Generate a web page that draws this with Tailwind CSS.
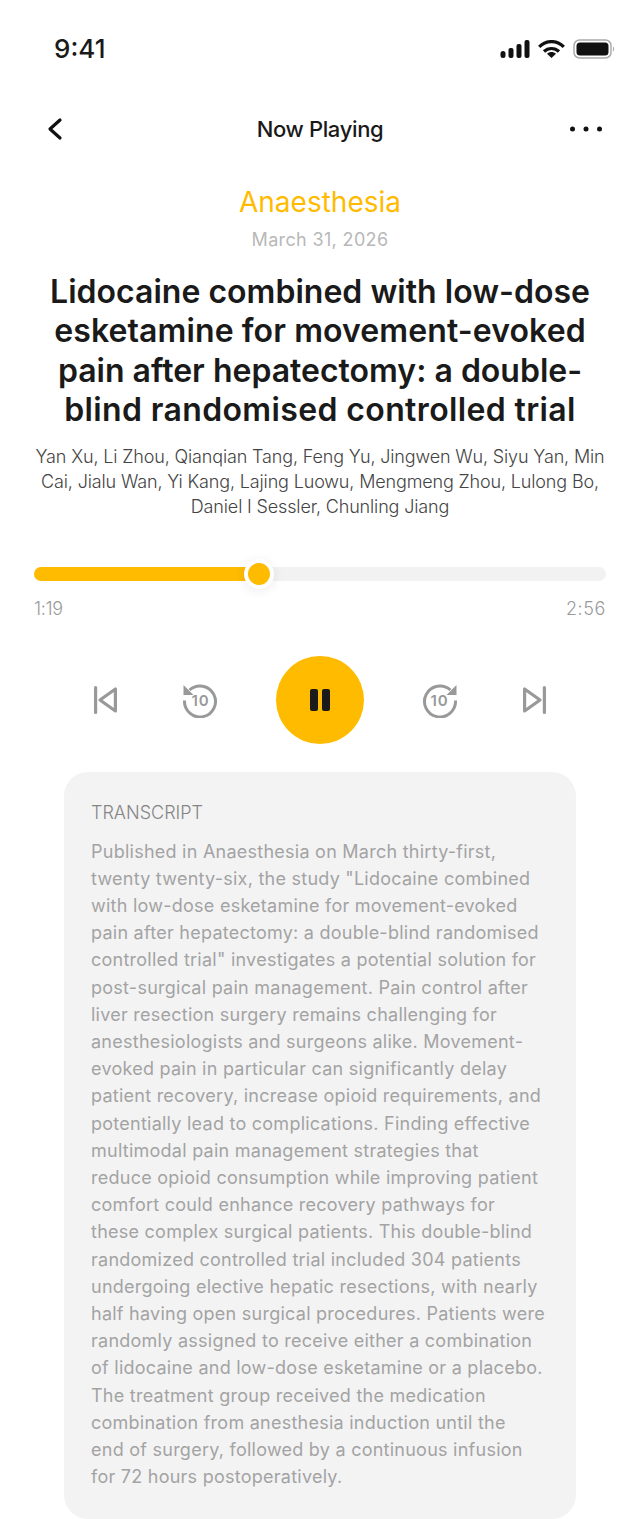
<!DOCTYPE html>
<html lang="en">
<head>
<meta charset="UTF-8">
<meta name="viewport" content="width=device-width, initial-scale=1.0">
<title>Now Playing</title>
<script src="https://cdn.jsdelivr.net/npm/@tailwindcss/browser@4"></script>
</head>
<body class="bg-white font-['Inter',sans-serif] text-[#1a1a1a] w-[640px] h-[1519px] overflow-hidden">

<!-- Status bar -->
<div class="h-[98px] pl-[54px] pr-[25px] pt-[33px] flex justify-between items-start">
  <span class="text-[26px] leading-[32px] font-medium">9:41</span>
  <div class="flex items-center gap-[8px] h-[32px]">
    <svg width="30" height="18" viewBox="0 0 30 18" fill="#111"><rect x="0.500" y="11" width="5" height="7" rx="2.500"/><rect x="8.500" y="8" width="5" height="10" rx="2"/><rect x="16.500" y="4" width="5" height="14" rx="2"/><rect x="24.500" y="0" width="5" height="18" rx="2"/></svg>
    <svg width="27" height="18" viewBox="0 0 27 18" fill="none" stroke="#111" stroke-width="3.200"><path d="M1.200 6.800C8-.2 19-.2 25.800 6.800"/><path d="M6 11.500c4.200-4 10.800-4 15 0"/><path d="M13.500 18l-4.500-4.300c2.500-2.200 6.500-2.200 9 0z" fill="#111" stroke="none"/></svg>
    <svg width="42" height="20" viewBox="0 0 42 20" fill="none"><rect x="1" y="1" width="37" height="18" rx="5.500" stroke="#aaa" stroke-width="1.500"/><rect x="3.500" y="3.500" width="32" height="13" rx="3.500" fill="#111"/><path d="M40 7.500c1.500.5 1.500 4.500 0 5z" fill="#aaa"/></svg>
  </div>
</div>

<!-- Nav -->
<div class="h-[62px] px-[38px] flex justify-between items-center">
  <svg width="34" height="30" viewBox="0 0 34 30" fill="none" stroke="#111" stroke-width="3.200" stroke-linecap="round" stroke-linejoin="round"><path d="M22 6L12 15 22 24"/></svg>
  <span class="text-[22px] font-medium tracking-[-0.35px]">Now Playing</span>
  <svg width="34" height="12" viewBox="0 0 34 12" fill="#111"><circle cx="4.500" cy="6" r="2.500"/><circle cx="18" cy="6" r="2.500"/><circle cx="31.500" cy="6" r="2.500"/></svg>
</div>

<!-- Article -->
<div class="text-center mt-[25px]">
  <div class="text-[28px] leading-[34px] text-[#ffbb00]">Anaesthesia</div>
  <div class="text-[18px] leading-[24px] mt-[9px] text-[#b8b8b8] tracking-[0.35px]">March 31, 2026</div>
  <h1 class="mt-[20px] text-[32px] leading-[39.400px] font-semibold">
    <span class="block tracking-[0.02px]">Lidocaine combined with low-dose</span>
    <span class="block tracking-[0.1px]">esketamine for movement-evoked</span>
    <span class="block tracking-[0px]">pain after hepatectomy: a double-</span>
    <span class="block tracking-[0.37px]">blind randomised controlled trial</span>
  </h1>
  <p class="mt-[14px] px-[30px] text-[18px] leading-[25px] font-light text-[#444] tracking-[-0.15px]">Yan Xu, Li Zhou, Qianqian Tang, Feng Yu, Jingwen Wu, Siyu Yan, Min Cai, Jialu Wan, Yi Kang, Lajing Luowu, Mengmeng Zhou, Lulong Bo, Daniel I Sessler, Chunling Jiang</p>
</div>

<!-- Progress -->
<div class="mx-[34px] mt-[48px]">
  <div class="relative h-[14px] rounded-full bg-[#f2f2f2]">
    <div class="h-full w-[226px] rounded-full bg-[#ffbb00]"></div>
    <div class="absolute left-[210px] top-[-8px] w-[30px] h-[30px] rounded-full bg-[#ffbb00] border-[4px] border-white shadow-[0_2px_12px_rgba(0,0,0,0.08)]"></div>
  </div>
  <div class="flex justify-between mt-[16px] text-[18px] leading-[24px] font-light text-[#9a9a9a]">
    <span class="tracking-[-0.3px]">1:19</span><span class="tracking-[0.6px]">2:56</span>
  </div>
</div>

<!-- Controls -->
<div class="mt-[35px] h-[88px] flex items-center justify-center gap-[58px]">
  <svg class="mr-[7px]" width="23" height="28" viewBox="0 0 23 28" fill="none" stroke="#999" stroke-width="3.200" stroke-linejoin="round" stroke-linecap="round"><path d="M1.600 1.600v24.800"/><path d="M21.400 3v22L6 14z"/></svg>
  <svg width="36" height="36" viewBox="0 0 36 36" fill="none" stroke="#999" stroke-width="3"><path d="M7.500 8A15.500 15.500 0 1 1 2.500 18.500"/><path d="M1.500 3v10h10z" fill="#999" stroke="none"/><text x="18.500" y="23.500" text-anchor="middle" stroke="none" fill="#999" font-size="15" font-weight="600" letter-spacing="1" font-family="Inter, sans-serif">10</text></svg>
  <div class="w-[88px] h-[88px] rounded-full bg-[#ffbb00] flex items-center justify-center gap-[4px]">
    <div class="w-[8px] h-[22px] rounded-[2px] bg-[#1a1a1a]"></div>
    <div class="w-[8px] h-[22px] rounded-[2px] bg-[#1a1a1a]"></div>
  </div>
  <svg width="36" height="36" viewBox="0 0 36 36" fill="none" stroke="#999" stroke-width="3"><path d="M28.500 8A15.500 15.500 0 1 0 33.500 18.500"/><path d="M34.500 3v10h-10z" fill="#999" stroke="none"/><text x="17.500" y="23.500" text-anchor="middle" stroke="none" fill="#999" font-size="15" font-weight="600" letter-spacing="1" font-family="Inter, sans-serif">10</text></svg>
  <svg class="ml-[7px]" width="23" height="28" viewBox="0 0 23 28" fill="none" stroke="#999" stroke-width="3.200" stroke-linejoin="round" stroke-linecap="round"><path d="M21.400 1.600v24.800"/><path d="M1.600 3v22L17 14z"/></svg>
</div>

<!-- Transcript -->
<div class="mx-[64px] mt-[28px] h-[747px] rounded-[24px] bg-[#f3f3f4] pt-[28px] px-[27px]">
  <div class="text-[18px] leading-[26px] font-light text-[#858585]">TRANSCRIPT</div>
  <p class="mt-[12px] text-[18px] leading-[27.200px] tracking-[0.25px] text-[#a3a3a3] whitespace-nowrap">Published in Anaesthesia on March thirty-first,<br>twenty twenty-six, the study "Lidocaine combined<br>with low-dose esketamine for movement-evoked<br>pain after hepatectomy: a double-blind randomised<br>controlled trial" investigates a potential solution for<br>post-surgical pain management. Pain control after<br>liver resection surgery remains challenging for<br>anesthesiologists and surgeons alike. Movement-<br>evoked pain in particular can significantly delay<br>patient recovery, increase opioid requirements, and<br>potentially lead to complications. Finding effective<br>multimodal pain management strategies that<br>reduce opioid consumption while improving patient<br>comfort could enhance recovery pathways for<br>these complex surgical patients. This double-blind<br>randomized controlled trial included 304 patients<br>undergoing elective hepatic resections, with nearly<br>half having open surgical procedures. Patients were<br>randomly assigned to receive either a combination<br>of lidocaine and low-dose esketamine or a placebo.<br>The treatment group received the medication<br>combination from anesthesia induction until the<br>end of surgery, followed by a continuous infusion<br>for 72 hours postoperatively.</p>
</div>
</body>
</html>
